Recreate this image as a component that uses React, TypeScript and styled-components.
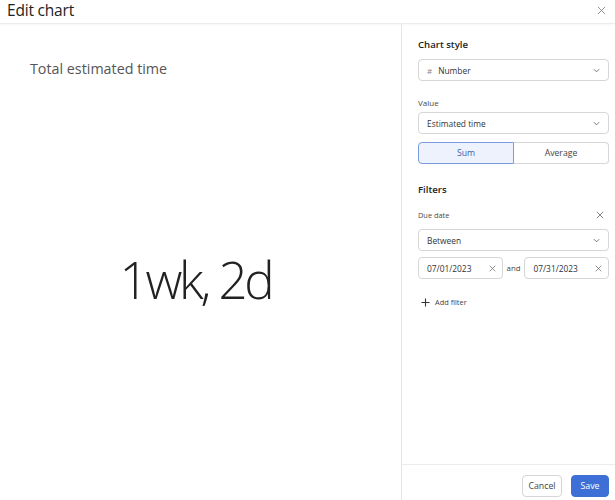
import React from "react";
import styled, { createGlobalStyle } from "styled-components";

const Global = createGlobalStyle`
  html, body { margin: 0; padding: 0; background: #fff; }
  body { font-family: "Open Sans", "Noto Sans", "Liberation Sans", sans-serif; color: #333; }
  #root { height: 500px; }
  * { box-sizing: border-box; }
`;

const Dialog = styled.div`
  display: flex;
  flex-direction: column;
  height: 500px;
  width: 615px;
  overflow: hidden;
`;

const Header = styled.div`
  height: 24px;
  display: flex;
  align-items: center;
  justify-content: space-between;
  padding: 0 9px 3px 7px;
  border-bottom: 1px solid #ececec;
  box-shadow: 0 1px 2px rgba(0,0,0,0.04);
`;

const Title = styled.div`
  font-size: 15.5px;
  color: #222;
  letter-spacing: -0.2px;
`;

const CloseBtn = styled.button`
  border: none;
  background: none;
  padding: 0;
  display: flex;
  color: #777;
`;

const Body = styled.div`
  flex: 1;
  display: flex;
  min-height: 0;
`;

const Preview = styled.div`
  flex: 1;
  display: flex;
  flex-direction: column;
  padding: 35px 0 0 30px;
`;

const ChartTitle = styled.div`
  font-size: 14.3px;
  color: #555;
  line-height: 20px;
`;

const BigNumber = styled.div`
  margin-top: 170px;
  margin-right: 40px;
  text-align: center;
  font-size: 51px;
  font-weight: 300;
  color: #222;
  line-height: 60px;
  letter-spacing: -3.2px;
`;

const Side = styled.div`
  width: 214px;
  border-left: 1px solid #e6e6e6;
  display: flex;
  flex-direction: column;
`;

const SideContent = styled.div`
  flex: 1;
  padding: 13px 6px 0 16px;
  display: flex;
  flex-direction: column;
`;

const SectionTitle = styled.div<{ $mt?: number }>`
  font-size: 9.6px;
  font-weight: 600;
  color: #222;
  line-height: 16px;
  margin-top: ${(p) => p.$mt ?? 0}px;
  margin-bottom: 6px;
`;

const FieldLabel = styled.div<{ $mt?: number; $mb?: number; $size?: number }>`
  display: flex;
  justify-content: space-between;
  align-items: center;
  font-size: ${(p) => p.$size ?? 8}px;
  color: #4a4a4a;
  line-height: 14px;
  margin-top: ${(p) => p.$mt ?? 0}px;
  margin-bottom: ${(p) => p.$mb ?? 2}px;
`;

const LabelAction = styled.span`
  display: flex;
  margin-right: 5px;
`;

const Select = styled.div<{ $mb?: number }>`
  height: 22px;
  border: 1px solid #d6d6d6;
  border-radius: 4px;
  display: flex;
  align-items: center;
  padding: 0 8px 0 8px;
  font-size: 8.4px;
  color: #333;
  margin-bottom: ${(p) => p.$mb ?? 0}px;
`;

const SelectText = styled.span`
  flex: 1;
  display: flex;
  align-items: center;
  gap: 6px;
`;

const Hash = styled.span`
  color: #888;
  font-size: 8px;
`;

const Toggle = styled.div`
  display: flex;
  height: 22px;
`;

const ToggleBtn = styled.div<{ $active?: boolean }>`
  flex: 1;
  display: flex;
  align-items: center;
  justify-content: center;
  font-size: 8.7px;
  border: 1px solid ${(p) => (p.$active ? "#7b9be0" : "#d6d6d6")};
  background: ${(p) => (p.$active ? "#edf2fd" : "#fff")};
  color: ${(p) => (p.$active ? "#3c5fa8" : "#444")};
  border-radius: ${(p) => (p.$active ? "4px 0 0 4px" : "0 4px 4px 0")};
  ${(p) => (p.$active ? "" : "border-left: none;")}
`;

const DateRow = styled.div`
  display: flex;
  align-items: center;
  gap: 4px;
  margin-top: 6px;
`;

const DateInput = styled.div`
  flex: 1;
  height: 22px;
  border: 1px solid #d6d6d6;
  border-radius: 4px;
  display: flex;
  align-items: center;
  justify-content: space-between;
  padding: 0 6px 0 8px;
  font-size: 8.4px;
  color: #333;
`;

const And = styled.span`
  font-size: 7.8px;
  color: #444;
`;

const AddFilter = styled.div`
  display: flex;
  align-items: center;
  gap: 5px;
  margin-top: 17px;
  padding-left: 3px;
  font-size: 7.4px;
  line-height: 12px;
  color: #444;
`;

const Footer = styled.div`
  height: 36px;
  border-top: 1px solid #ececec;
  display: flex;
  justify-content: flex-end;
  align-items: flex-start;
  gap: 9px;
  padding: 10px 6px 0 0;
`;

const Button = styled.button<{ $primary?: boolean }>`
  height: 22px;
  padding: 0;
  border-radius: 4px;
  font-family: inherit;
  font-size: 8.8px;
  border: 1px solid ${(p) => (p.$primary ? "#3d6fd6" : "#d6d6d6")};
  background: ${(p) => (p.$primary ? "#3d6fd6" : "#fff")};
  color: ${(p) => (p.$primary ? "#fff" : "#444")};
  width: ${(p) => (p.$primary ? 38 : 40)}px;
`;

const X = ({ size = 8, color = "#777" }: { size?: number; color?: string }) => (
  <svg width={size} height={size} viewBox="0 0 10 10" fill="none" stroke={color} strokeWidth="1">
    <path d="M1 1L9 9M9 1L1 9" />
  </svg>
);

const Chevron = () => (
  <svg width="7" height="5" viewBox="0 0 8 5" fill="none" stroke="#666" strokeWidth="1">
    <path d="M1 1l3 3 3-3" />
  </svg>
);

const Plus = () => (
  <svg width="9" height="9" viewBox="0 0 10 10" fill="none" stroke="#333" strokeWidth="1.2">
    <path d="M5 0.5v9M0.5 5h9" />
  </svg>
);

export default function App() {
  return (
    <>
      <Global />
      <Dialog>
        <Header>
          <Title>Edit chart</Title>
          <CloseBtn>
            <X size={9} color="#888" />
          </CloseBtn>
        </Header>
        <Body>
          <Preview>
            <ChartTitle>Total estimated time</ChartTitle>
            <BigNumber>1wk, 2d</BigNumber>
          </Preview>
          <Side>
            <SideContent>
              <SectionTitle>Chart style</SectionTitle>
              <Select>
                <SelectText>
                  <Hash>#</Hash>Number
                </SelectText>
                <Chevron />
              </Select>
              <FieldLabel $mt={15} $mb={2}>Value</FieldLabel>
              <Select $mb={8}>
                <SelectText>Estimated time</SelectText>
                <Chevron />
              </Select>
              <Toggle>
                <ToggleBtn $active>Sum</ToggleBtn>
                <ToggleBtn>Average</ToggleBtn>
              </Toggle>
              <SectionTitle $mt={18}>Filters</SectionTitle>
              <FieldLabel $mt={4} $mb={7} $size={7.4}>
                Due date
                <LabelAction>
                  <X size={8} color="#666" />
                </LabelAction>
              </FieldLabel>
              <Select>
                <SelectText>Between</SelectText>
                <Chevron />
              </Select>
              <DateRow>
                <DateInput>
                  07/01/2023
                  <X size={7} color="#666" />
                </DateInput>
                <And>and</And>
                <DateInput>
                  07/31/2023
                  <X size={7} color="#666" />
                </DateInput>
              </DateRow>
              <AddFilter>
                <Plus />
                Add filter
              </AddFilter>
            </SideContent>
            <Footer>
              <Button>Cancel</Button>
              <Button $primary>Save</Button>
            </Footer>
          </Side>
        </Body>
      </Dialog>
    </>
  );
}
